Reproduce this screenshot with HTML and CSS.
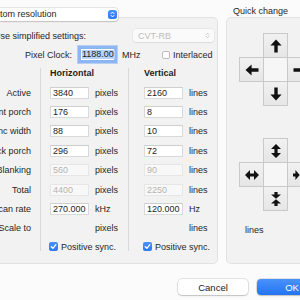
FILE: index.html
```html
<!DOCTYPE html>
<html>
<head>
<meta charset="utf-8">
<link rel="stylesheet" href="styles.css">
</head>
<body>
<div class="window">
  <div class="panes">
    <section class="settings">
      <div class="popup main-popup">
        <span class="popup-text">Custom resolution</span>
        <span class="stepper"><svg viewBox="0 0 9 9" width="9" height="9"><path d="M3 3.6 L4.5 2.1 L6 3.6 M3 5.4 L4.5 6.9 L6 5.4" fill="none" stroke="#fff" stroke-width="1" stroke-linecap="round" stroke-linejoin="round"/></svg></span>
      </div>
      <div class="row simplified">
        <span class="simplified-label">Use simplified settings:</span>
        <div class="popup disabled-popup">
          <span>CVT-RB</span>
          <svg viewBox="0 0 9 9" width="9" height="9"><path d="M3.2 3.6 L4.5 2.3 L5.8 3.6 M3.2 5.4 L4.5 6.7 L5.8 5.4" fill="none" stroke="#c4c4c4" stroke-width="0.9" stroke-linecap="round" stroke-linejoin="round"/></svg>
        </div>
      </div>
      <div class="row clock">
        <span class="clock-label">Pixel Clock:</span>
        <span class="field focused"><span class="selected">1188.00</span></span>
        <span class="unit mhz">MHz</span>
        <span class="check"></span>
        <span class="check-text">Interlaced</span>
      </div>
      <div class="table">
        <div class="col labels">
          <div class="head"></div>
          <div class="cell">Active</div>
          <div class="cell">Front porch</div>
          <div class="cell">Sync width</div>
          <div class="cell">Back porch</div>
          <div class="cell">Blanking</div>
          <div class="cell">Total</div>
          <div class="cell">Scan rate</div>
          <div class="cell">Scale to</div>
          <div class="cell last"></div>
        </div>
        <div class="col values horiz">
          <div class="head">Horizontal</div>
          <div class="cell"><span class="field">3840</span><span class="unit">pixels</span></div>
          <div class="cell"><span class="field">176</span><span class="unit">pixels</span></div>
          <div class="cell"><span class="field">88</span><span class="unit">pixels</span></div>
          <div class="cell"><span class="field">296</span><span class="unit">pixels</span></div>
          <div class="cell"><span class="field disabled">560</span><span class="unit">pixels</span></div>
          <div class="cell"><span class="field disabled">4400</span><span class="unit">pixels</span></div>
          <div class="cell"><span class="field">270.000</span><span class="unit">kHz</span></div>
          <div class="cell"><span class="field hidden"></span><span class="unit">pixels</span></div>
          <div class="cell last"><span class="check on"><svg viewBox="0 0 9 9" width="9" height="9"><path d="M2.2 4.7 L3.9 6.3 L6.9 2.7" fill="none" stroke="#fff" stroke-width="1.3" stroke-linecap="round" stroke-linejoin="round"/></svg></span><span class="check-text">Positive sync.</span></div>
        </div>
        <div class="col values vert">
          <div class="head">Vertical</div>
          <div class="cell"><span class="field">2160</span><span class="unit">lines</span></div>
          <div class="cell"><span class="field">8</span><span class="unit">lines</span></div>
          <div class="cell"><span class="field">10</span><span class="unit">lines</span></div>
          <div class="cell"><span class="field">72</span><span class="unit">lines</span></div>
          <div class="cell"><span class="field disabled">90</span><span class="unit">lines</span></div>
          <div class="cell"><span class="field disabled">2250</span><span class="unit">lines</span></div>
          <div class="cell"><span class="field">120.000</span><span class="unit">Hz</span></div>
          <div class="cell"><span class="field hidden"></span><span class="unit">lines</span></div>
          <div class="cell last"><span class="check on"><svg viewBox="0 0 9 9" width="9" height="9"><path d="M2.2 4.7 L3.9 6.3 L6.9 2.7" fill="none" stroke="#fff" stroke-width="1.3" stroke-linecap="round" stroke-linejoin="round"/></svg></span><span class="check-text">Positive sync.</span></div>
        </div>
      </div>
    </section>
    <section class="quick">
      <div class="quick-title">Quick change</div>
      <div class="quick-box">
        <div class="pad">
          <span class="slot"></span>
          <span class="key"><svg class="ico" viewBox="0 0 14 14"><path d="M7 0.5 L12.6 6.6 L8.7 6.6 L8.7 13.5 L5.3 13.5 L5.3 6.6 L1.4 6.6 Z"/></svg></span>
          <span class="slot"></span>
          <span class="key"><svg class="ico rot-left" viewBox="0 0 14 14"><path d="M7 0.5 L12.6 6.6 L8.7 6.6 L8.7 13.5 L5.3 13.5 L5.3 6.6 L1.4 6.6 Z"/></svg></span>
          <span class="key center"></span>
          <span class="key"><svg class="ico rot-right" viewBox="0 0 14 14"><path d="M7 0.5 L12.6 6.6 L8.7 6.6 L8.7 13.5 L5.3 13.5 L5.3 6.6 L1.4 6.6 Z"/></svg></span>
          <span class="slot"></span>
          <span class="key"><svg class="ico rot-down" viewBox="0 0 14 14"><path d="M7 0.5 L12.6 6.6 L8.7 6.6 L8.7 13.5 L5.3 13.5 L5.3 6.6 L1.4 6.6 Z"/></svg></span>
          <span class="slot"></span>
        </div>
        <div class="pad second">
          <span class="slot"></span>
          <span class="key"><svg class="ico" viewBox="0 0 14 14"><path d="M7 0 L12 5 L8.6 5 L8.6 9 L12 9 L7 14 L2 9 L5.4 9 L5.4 5 L2 5 Z"/></svg></span>
          <span class="slot"></span>
          <span class="key"><svg class="ico rot-right" viewBox="0 0 14 14"><path d="M7 0 L12 5 L8.6 5 L8.6 9 L12 9 L7 14 L2 9 L5.4 9 L5.4 5 L2 5 Z"/></svg></span>
          <span class="key center"></span>
          <span class="key"><svg class="ico rot-right" viewBox="0 0 14 14"><path d="M5.4 0 H8.6 V2.4 H12 L7 6.7 L2 2.4 H5.4 Z M5.4 14 H8.6 V11.6 H12 L7 7.3 L2 11.6 H5.4 Z"/></svg></span>
          <span class="slot"></span>
          <span class="key"><svg class="ico" viewBox="0 0 14 14"><path d="M5.4 0 H8.6 V2.4 H12 L7 6.7 L2 2.4 H5.4 Z M5.4 14 H8.6 V11.6 H12 L7 7.3 L2 11.6 H5.4 Z"/></svg></span>
          <span class="slot"></span>
        </div>
        <div class="lines-note">lines</div>
      </div>
    </section>
  </div>
  <div class="buttons">
    <button class="btn">Cancel</button>
    <button class="btn primary">OK</button>
  </div>
</div>
</body>
</html>
```

FILE: styles.css
```css
html, body {
  margin: 0;
  padding: 0;
}
body {
  width: 300px;
  height: 300px;
  overflow: hidden;
  background: #fbfbfb;
  font-family: "Liberation Sans", Arial, sans-serif;
  font-size: 9px;
  color: #262626;
}
.window {
  padding-top: 6px;
  margin-left: -40px;
  width: 420px;
}
.panes {
  display: flex;
  align-items: flex-start;
  gap: 8px;
}
.settings {
  margin-top: 11px;
  width: 258px;
  height: 247px;
  box-sizing: border-box;
  border: 1px solid #e2e2e2;
  border-radius: 5px;
  background: #f2f2f2;
}
.popup {
  display: flex;
  align-items: center;
  box-sizing: border-box;
  height: 13px;
  border-radius: 3px;
}
.main-popup {
  margin-top: -10px;
  margin-left: 17px;
  width: 140px;
  padding-left: 6px;
  padding-right: 1px;
  background: #fff;
  box-shadow: 0 0 0 0.5px rgba(0, 0, 0, 0.18), 0 1px 1.5px rgba(0, 0, 0, 0.12);
}
.popup-text {
  flex: 1;
  line-height: 13px;
}
.stepper {
  display: flex;
  width: 9px;
  height: 9px;
  border-radius: 2.5px;
  background: linear-gradient(#4b93fb, #2a78f4);
}
.row {
  display: flex;
  align-items: center;
  height: 13px;
}
.simplified {
  margin-top: 8px;
}
.simplified-label {
  width: 172px;
  padding-left: 33px;
  box-sizing: border-box;
}
.disabled-popup {
  width: 81px;
  padding: 0 2px 0 5px;
  color: #bdbdbd;
  background: rgba(255, 255, 255, 0.6);
  box-shadow: 0 0 0 0.5px rgba(0, 0, 0, 0.08), 0 1px 1px rgba(0, 0, 0, 0.05);
  justify-content: space-between;
}
.clock {
  margin-top: 6px;
}
.clock-label {
  width: 111px;
  text-align: right;
}
.field {
  display: flex;
  align-items: center;
  box-sizing: border-box;
  width: 39px;
  height: 12px;
  padding-left: 2px;
  background: #fff;
  border: 1px solid #d9d9d9;
  border-top-color: #cfcfcf;
  line-height: 10px;
  color: #1e1e1e;
}
.field.focused {
  margin-left: 8px;
  width: 35px;
  height: 13px;
  padding-left: 1px;
  border-color: #8fb4ef;
  box-shadow: 0 0 0 2px #8db6f6, 0 0 0 3px rgba(120, 166, 240, 0.45);
}
.selected {
  background: #b5d4fb;
  line-height: 9px;
  padding-right: 1px;
}
.field.disabled {
  color: #b4b4b4;
  background: #f8f8f8;
  border-color: #e6e6e6;
}
.field.hidden {
  visibility: hidden;
}
.unit {
  margin-left: 6px;
}
.unit.mhz {
  margin-left: 7px;
  width: 40px;
}
.check {
  display: flex;
  box-sizing: border-box;
  width: 8px;
  height: 8px;
  border: 1px solid #bdbdbd;
  border-radius: 2px;
  background: #fff;
}
.check.on {
  width: 9px;
  height: 9px;
  border: none;
  background: linear-gradient(#4a91fa, #2c79f5);
}
.check-text {
  margin-left: 3px;
}
.table {
  display: flex;
  margin-top: 7px;
}
.col {
  display: flex;
  flex-direction: column;
  box-sizing: border-box;
}
.labels {
  width: 79px;
  padding-right: 9px;
  text-align: right;
}
.values {
  border-left: 1px solid #d8d8d8;
}
.horiz {
  width: 88px;
  padding-left: 9px;
}
.vert {
  width: 89px;
  padding-left: 15px;
}
.head {
  height: 15px;
  line-height: 11px;
  font-weight: bold;
  color: #1e1e1e;
}
.cell {
  display: flex;
  align-items: center;
  justify-content: flex-start;
  height: 19.4px;
}
.labels .cell {
  justify-content: flex-end;
}
.cell.last {
  height: 13px;
  box-sizing: border-box;
  padding-top: 4px;
  align-items: flex-start;
}
.cell.last .check {
  margin-left: -1px;
}
.cell.last .check-text {
  line-height: 10px;
}
.quick {
  width: 140px;
}
.quick-title {
  height: 11px;
  line-height: 11px;
  padding-left: 7px;
}
.quick-box {
  height: 247px;
  box-sizing: border-box;
  border: 1px solid #e2e2e2;
  border-radius: 5px;
  background: #f2f2f2;
  padding: 15px 0 0 12px;
}
.pad {
  display: grid;
  grid-template-columns: repeat(3, 24px);
  grid-template-rows: repeat(3, 24px);
}
.pad.second {
  margin-top: 33px;
}
.key {
  display: flex;
  align-items: center;
  justify-content: center;
  width: 25px;
  height: 25px;
  box-sizing: border-box;
  border: 1px solid #c9c9c9;
  background: linear-gradient(#f1f1f1, #e6e6e6);
}
.key.center {
  background: #f6f6f6;
}
.ico {
  width: 14px;
  height: 14px;
  fill: #111;
}
.rot-left {
  transform: rotate(-90deg);
}
.rot-right {
  transform: rotate(90deg);
}
.rot-down {
  transform: rotate(180deg);
}
.lines-note {
  margin-top: 15px;
  margin-left: 6px;
  line-height: 11px;
}
.buttons {
  display: flex;
  gap: 9px;
  margin-top: 15px;
  padding-left: 218px;
}
.btn {
  width: 70px;
  height: 16px;
  padding: 0;
  border: none;
  border-radius: 4px;
  font-family: "Liberation Sans", Arial, sans-serif;
  font-size: 9.5px;
  color: #222;
  background: #fff;
  box-shadow: 0 0 0 0.5px rgba(0, 0, 0, 0.2), 0 1px 1.5px rgba(0, 0, 0, 0.15);
}
.btn.primary {
  color: #fff;
  background: linear-gradient(#4a92fb, #2274f3);
}
```
